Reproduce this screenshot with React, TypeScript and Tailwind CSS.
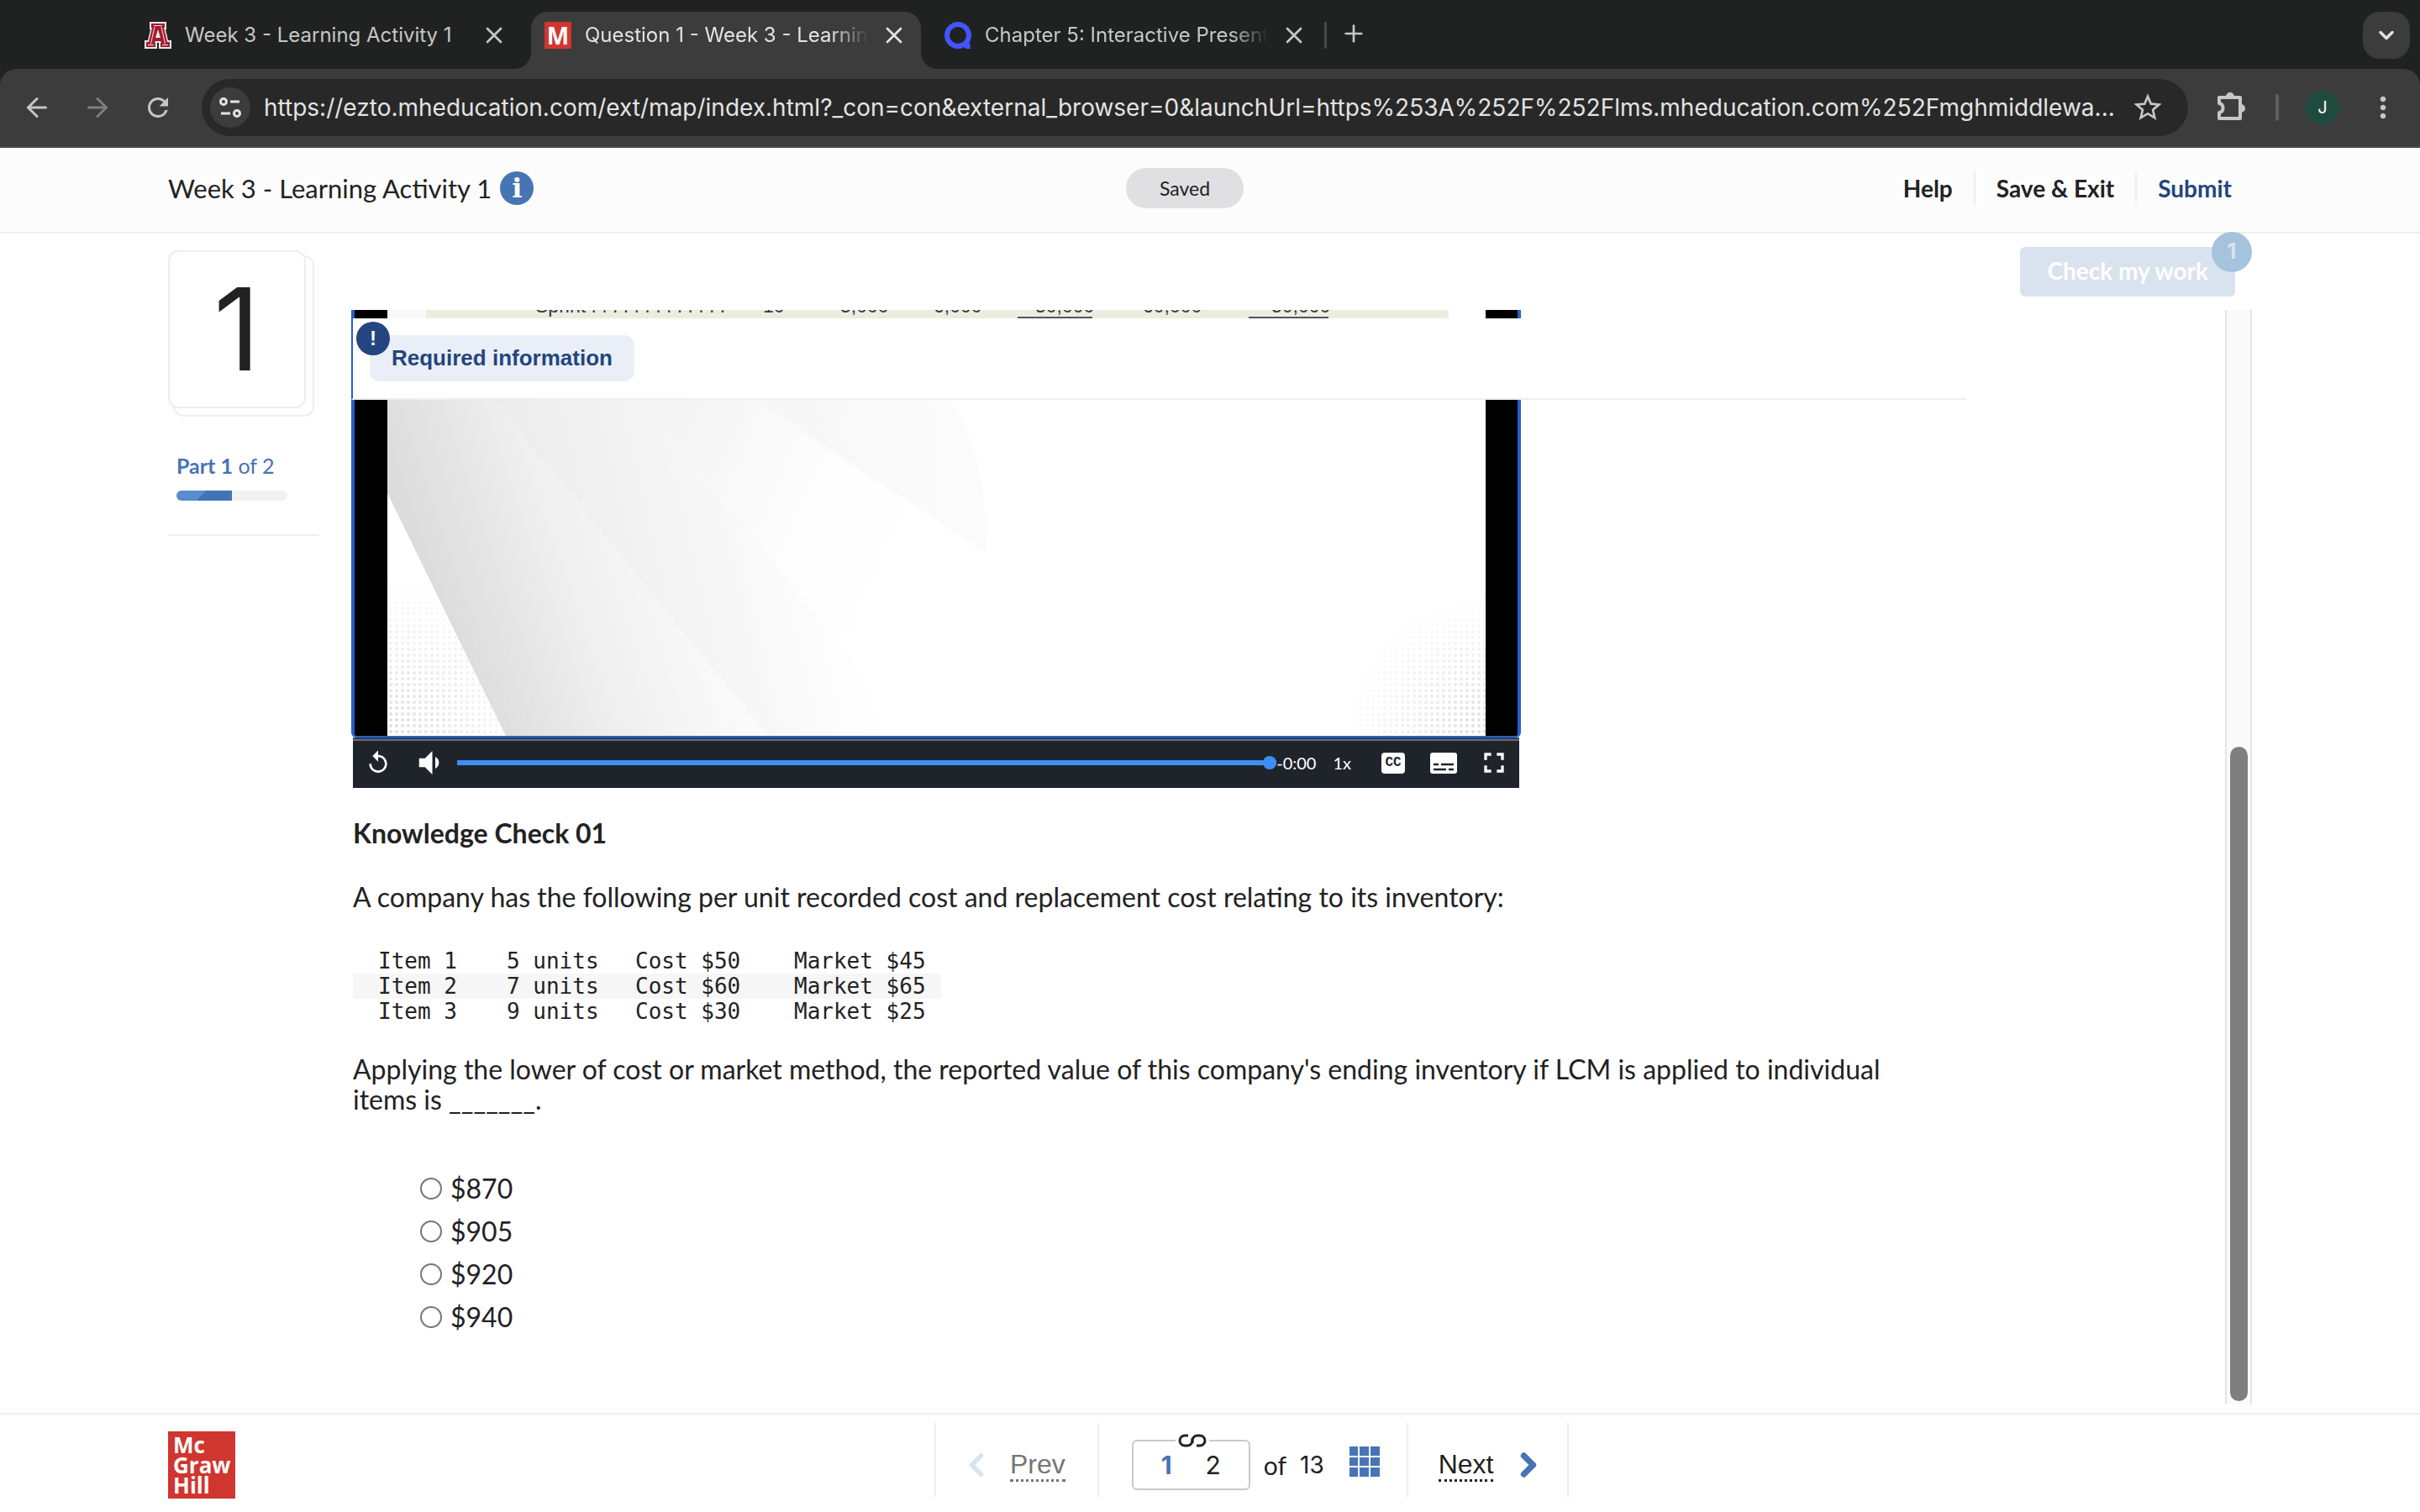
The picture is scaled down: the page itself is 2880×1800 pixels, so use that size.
import { ReactNode } from "react";
import {
  ArrowLeft,
  ArrowRight,
  ChevronDown,
  ChevronLeft,
  ChevronRight,
  Plus,
  X,
} from "lucide-react";
import {
  MdFullscreen,
  MdMoreVert,
  MdRefresh,
  MdReplay,
  MdStarBorder,
  MdVolumeDown,
} from "react-icons/md";

const pageUrl =
  "https://ezto.mheducation.com/ext/map/index.html?_con=con&external_browser=0&launchUrl=https%253A%252F%252Flms.mheducation.com%252Fmghmiddlewa...";

const inventory = [
  { item: "Item 1", units: "5 units", cost: "Cost $50", market: "Market $45" },
  { item: "Item 2", units: "7 units", cost: "Cost $60", market: "Market $65" },
  { item: "Item 3", units: "9 units", cost: "Cost $30", market: "Market $25" },
];

const answers = ["$870", "$905", "$920", "$940"];

function ArizonaIcon() {
  return (
    <svg viewBox="0 0 32 32" className="size-8 shrink-0">
      <path
        d="M6 0h20v9h-1l3 13h4v10H17v-7h-2v7H0V22h4L7 9H6z"
        fill="#e9e9e9"
      />
      <path
        d="M8 2h16v5h-1l4 17h3v6H19v-5h1l-1-2h-6l-1 2h1v5H2v-6h3L9 7H8z"
        fill="#a51c30"
      />
      <path
        d="M11 4.500h10M12 6L7.500 26M20 6l4.500 20M4 27.500h7M21 27.500h7"
        fill="none"
        stroke="#e9e9e9"
      />
      <path d="M16 9l3 10h-6z" fill="#e9e9e9" />
    </svg>
  );
}

function McGrawIcon() {
  return (
    <span className="flex size-8 shrink-0 items-center justify-center bg-[#d13530] font-['Open_Sans',sans-serif] text-[28px] leading-8 font-bold text-white">
      M
    </span>
  );
}

function QuizIcon() {
  return (
    <svg viewBox="0 0 32 32" className="size-8 shrink-0">
      <circle cx="16" cy="16" r="13" fill="none" stroke="#4255ff" strokeWidth="6" />
      <path d="M21 27l9-2 1 7h-6z" fill="#4255ff" />
    </svg>
  );
}

function SiteInfoIcon() {
  return (
    <svg
      viewBox="0 0 28 28"
      className="size-7"
      fill="none"
      stroke="#e3e3e3"
      strokeWidth="3"
    >
      <circle cx="6" cy="7" r="3.5" />
      <path d="M14 7h11M3 21h11" />
      <circle cx="22" cy="21" r="3.5" />
    </svg>
  );
}

function PuzzleIcon() {
  return (
    <svg
      viewBox="0 0 36 36"
      className="size-9"
      fill="none"
      stroke="#c7c7c7"
      strokeWidth="4"
      strokeLinejoin="round"
    >
      <path d="M5 6h25v25H5v-7c6-1 6-10 0-11z" />
      <path d="M13 5a5 5 0 0 1 10 0zM31 14a5 5 0 0 1 0 10z" fill="#c7c7c7" stroke="none" />
    </svg>
  );
}

function TabFlare({ className }: { className: string }) {
  return (
    <svg
      viewBox="0 0 20 20"
      className={`absolute bottom-0 size-5 ${className}`}
      fill="#3c3c3c"
    >
      <path d="M20 0A20 20 0 0 1 0 20h20z" />
    </svg>
  );
}

interface TabProps {
  icon: ReactNode;
  title: string;
  active?: boolean;
  faded?: boolean;
}

function BrowserTab({ icon, title, active, faded }: TabProps) {
  return (
    <div
      className={
        active
          ? "relative w-[464px] rounded-t-[20px] bg-[#3c3c3c] pb-3 text-[#e3e3e3]"
          : "w-[464px] text-[#c7c7c7]"
      }
    >
      {active && (
        <>
          <TabFlare className="-left-5" />
          <TabFlare className="-right-5 -scale-x-100" />
        </>
      )}
      <div className="flex h-14 items-center px-4">
        {icon}
        <span
          className={
            faded
              ? "ml-4 flex-1 overflow-hidden text-2xl whitespace-nowrap [mask-image:linear-gradient(to_right,black_85%,transparent_98%)]"
              : "ml-4 flex-1 text-2xl whitespace-nowrap"
          }
        >
          {title}
        </span>
        <button aria-label="Close tab" className="ml-2">
          <X className="size-8" strokeWidth={2} />
        </button>
      </div>
    </div>
  );
}

function BrowserChrome() {
  return (
    <div className="bg-[#202221] font-[Inter,sans-serif]">
      <div className="flex h-[82px] items-start gap-3 pt-3.5 pr-3 pl-[156px]">
        <BrowserTab icon={<ArizonaIcon />} title="Week 3 - Learning Activity 1" />
        <BrowserTab
          icon={<McGrawIcon />}
          title="Question 1 - Week 3 - Learning Activity 1"
          active
          faded
        />
        <BrowserTab
          icon={<QuizIcon />}
          title="Chapter 5: Interactive Presentation"
          faded
        />
        <div className="-ml-2 flex h-14 items-center gap-4 text-[#c7c7c7]">
          <span className="h-8 w-[3px] rounded bg-[#4a4a4a]" />
          <button aria-label="New tab" className="-mt-1">
            <Plus className="size-8" strokeWidth={2} />
          </button>
        </div>
        <button
          aria-label="Search tabs"
          className="ml-auto flex size-14 items-center justify-center rounded-[20px] bg-[#3c3c3c] text-[#e3e3e3]"
        >
          <ChevronDown className="size-7" strokeWidth={3} />
        </button>
      </div>
      <div className="flex h-[94px] items-center rounded-t-[20px] border-b-2 border-[#4a4a4a] bg-[#3c3c3c] px-6 text-[#c7c7c7]">
        <button aria-label="Back" className="px-0.5">
          <ArrowLeft className="size-9" strokeWidth={2} />
        </button>
        <button aria-label="Forward" className="ml-8 px-0.5 text-[#7f7f7f]">
          <ArrowRight className="size-9" strokeWidth={2} />
        </button>
        <button aria-label="Reload" className="ml-8 px-0.5">
          <MdRefresh className="size-9" />
        </button>
        <div className="ml-8 flex h-[68px] min-w-0 flex-1 items-center rounded-full bg-[#282828] pr-7 pl-2.5">
          <button
            aria-label="View site information"
            className="flex size-12 shrink-0 items-center justify-center rounded-full bg-[#3c3c3c]"
          >
            <SiteInfoIcon />
          </button>
          <input
            aria-label="Address"
            readOnly
            value={pageUrl}
            className="ml-4 min-w-0 flex-1 bg-transparent text-[28px] text-[#e3e3e3] outline-none"
          />
          <button aria-label="Bookmark" className="ml-3">
            <MdStarBorder className="size-10" />
          </button>
        </div>
        <button aria-label="Extensions" className="ml-8">
          <PuzzleIcon />
        </button>
        <span className="ml-9 h-8 w-1 rounded bg-[#5f5f5f]" />
        <button
          aria-label="Profile"
          className="ml-8 flex size-10 items-center justify-center rounded-full bg-[#1f4b3f] text-xl text-white"
        >
          J
        </button>
        <button aria-label="Menu" className="ml-8">
          <MdMoreVert className="size-10" />
        </button>
      </div>
    </div>
  );
}

function AssignmentHeader() {
  return (
    <header className="grid h-[102px] grid-cols-[1fr_auto_1fr] items-center border-b-2 border-[#eeeeee] bg-[#fcfcfc] pr-[212px] pb-1 pl-[200px]">
      <div className="flex items-center gap-2.5">
        <h1 className="text-[31px] leading-10">Week 3 - Learning Activity 1</h1>
        <button
          aria-label="Assignment information"
          className="flex size-10 items-center justify-center rounded-full bg-[#4774b5] font-['DejaVu_Serif',serif] text-[32px] leading-10 font-bold text-white"
        >
          i
        </button>
      </div>
      <span className="mr-12 rounded-full bg-[#e0dfe2] px-10 py-2 text-[23px] leading-8">
        Saved
      </span>
      <nav className="flex items-center justify-end divide-x-2 divide-[#eeeeee] text-[28px] leading-10 font-bold">
        <button className="px-[25px]">Help</button>
        <button className="px-[25px]">Save &amp; Exit</button>
        <button className="pr-3 pl-[25px] text-[#24457f]">Submit</button>
      </nav>
    </header>
  );
}

function QuestionSidebar() {
  return (
    <aside className="w-[180px] shrink-0 pt-5">
      <div className="relative h-[198px] w-[174px]">
        <div className="absolute right-0 bottom-0 h-[192px] w-[168px] rounded-xl border-2 border-[#eeeeee]" />
        <div className="relative flex h-[188px] w-[164px] items-center justify-center rounded-xl border-2 border-[#eeeeee] bg-white font-[Inter,sans-serif] text-[136px] leading-none">
          1
        </div>
      </div>
      <div className="mt-10 border-b-2 border-[#eeeeee] pb-10 pl-2.5">
        <p className="text-[25px] leading-9 text-[#4673b6]">
          <b>Part 1</b> of 2
        </p>
        <div className="mt-3 h-3 w-[132px] overflow-hidden rounded-full bg-[#f1f1f1]">
          <div className="h-full w-1/2 bg-[linear-gradient(135deg,#568dce_46%,#4273b6_46%)]" />
        </div>
      </div>
    </aside>
  );
}

// Slide table row that is still visible above the pinned banner
function VideoTopStrip() {
  return (
    <div className="flex h-2.5 w-[1392px] border-x-4 border-[#2860cb] bg-black">
      <svg
        viewBox="461 0 1307 10"
        className="ml-[39px] h-2.5 w-[1307px]"
        fontFamily="Liberation Sans, sans-serif"
        fontSize="23"
        fill="#3a3a3a"
      >
        <rect x="461" width="1307" height="10" fill="#f8f8f8" />
        <rect x="507" width="1217" height="10" fill="#ecece0" />
        <rect x="1724" width="44" height="10" fill="#fff" />
        <text x="637" y="3">Sprint . . . . . . . . . . . . .</text>
        <text x="908" y="3">10</text>
        <text x="1000" y="3">5,000</text>
        <text x="1111" y="3">6,000</text>
        <text x="1232" y="3">50,000</text>
        <text x="1360" y="3">60,000</text>
        <text x="1513" y="3">50,000</text>
        <path d="M1211 9h89M1486 9h95" stroke="#555" strokeWidth="2" />
      </svg>
    </div>
  );
}

function RequiredBanner() {
  return (
    <div className="flex h-[97px] items-start border-b-2 border-l-2 border-b-[#efefef] border-l-[#2860cb] bg-white pt-5 pl-5">
      <div className="relative rounded-xl bg-[#eaeff7] px-[26px]">
        <span className="absolute -top-4 -left-4 flex size-10 items-center justify-center rounded-full bg-[#24457f] font-['Liberation_Sans',sans-serif] text-2xl font-bold text-white">
          !
        </span>
        <h2 className="font-['Liberation_Sans',sans-serif] text-[26px] leading-[55px] font-bold text-[#24457f]">
          Required information
        </h2>
      </div>
    </div>
  );
}

function VideoStill() {
  return (
    <svg viewBox="461 476 1307 400" className="h-[400px] w-[1307px]">
      <defs>
        <linearGradient id="near" gradientUnits="userSpaceOnUse" x1="530" y1="740" x2="820" y2="640">
          <stop offset="0" stopColor="#dcdcdc" />
          <stop offset="0.5" stopColor="#efefef" />
          <stop offset="1" stopColor="#fbfbfb" />
        </linearGradient>
        <linearGradient id="mid" gradientUnits="userSpaceOnUse" x1="640" y1="640" x2="990" y2="560">
          <stop offset="0" stopColor="#ececec" />
          <stop offset="1" stopColor="#fff" />
        </linearGradient>
        <linearGradient id="far" gradientUnits="userSpaceOnUse" x1="800" y1="480" x2="1120" y2="620">
          <stop offset="0" stopColor="#f4f4f4" />
          <stop offset="0.6" stopColor="#fdfdfd" />
          <stop offset="1" stopColor="#fff" />
        </linearGradient>
        <linearGradient id="edge" gradientUnits="userSpaceOnUse" x1="900" y1="0" x2="1175" y2="0">
          <stop offset="0" stopColor="#f6f6f6" />
          <stop offset="1" stopColor="#fcfcfc" />
        </linearGradient>
        <pattern id="dots" width="7" height="7" patternUnits="userSpaceOnUse">
          <circle cx="3" cy="3" r="2" fill="#dcdcdc" />
        </pattern>
        <radialGradient id="fadeLeft" gradientUnits="userSpaceOnUse" cx="461" cy="876" r="190">
          <stop offset="0" stopColor="#fff" />
          <stop offset="1" stopColor="#000" />
        </radialGradient>
        <radialGradient id="fadeRight" gradientUnits="userSpaceOnUse" cx="1768" cy="876" r="170">
          <stop offset="0" stopColor="#fff" />
          <stop offset="1" stopColor="#000" />
        </radialGradient>
        <mask id="maskLeft">
          <rect x="461" y="476" width="300" height="400" fill="url(#fadeLeft)" />
        </mask>
        <mask id="maskRight">
          <rect x="1500" y="476" width="268" height="400" fill="url(#fadeRight)" />
        </mask>
      </defs>
      <rect x="461" y="476" width="1307" height="400" fill="#fff" />
      <path d="M900 476h230q45 60 45 184z" fill="url(#edge)" />
      <path d="M762 476h138l275 184-60 216h-26z" fill="url(#far)" />
      <path d="M587 476h175l327 400H914z" fill="url(#mid)" />
      <path d="M461 476h126l327 400H602L461 587z" fill="url(#near)" />
      <rect x="461" y="676" width="200" height="200" fill="url(#dots)" mask="url(#maskLeft)" />
      <rect x="1560" y="676" width="208" height="200" fill="url(#dots)" mask="url(#maskRight)" />
    </svg>
  );
}

function VideoPlayer() {
  return (
    <div className="w-[1392px]">
      <div className="rounded-b-md border-x-4 border-b-2 border-[#2860cb] bg-black pl-[39px]">
        <VideoStill />
      </div>
      <div className="mx-0.5 h-[60px] border-t-2 border-[#2c3f63] bg-[#1f242b] text-white">
        <div className="flex h-[54px] items-center border-t-2 border-[#666b72] pr-2.5 pl-3.5">
          <button aria-label="Replay">
            <MdReplay className="size-8" />
          </button>
          <button aria-label="Mute" className="ml-6">
            <MdVolumeDown className="size-[42px]" />
          </button>
          <input
            type="range"
            aria-label="Seek"
            min={0}
            max={100}
            defaultValue={100}
            className="ml-3 h-1.5 min-w-0 flex-1 appearance-none bg-[#3f8ef7] [&::-webkit-slider-thumb]:size-4 [&::-webkit-slider-thumb]:appearance-none [&::-webkit-slider-thumb]:rounded-full [&::-webkit-slider-thumb]:bg-[#3f8ef7]"
          />
          <span className="text-[20px]">-0:00</span>
          <button aria-label="Playback speed" className="ml-5 text-[20px]">
            1x
          </button>
          <button
            aria-label="Captions"
            className="ml-9 flex h-[25px] w-7 items-center justify-center rounded-sm bg-white font-['Liberation_Mono',monospace] text-base leading-none font-bold text-[#1f242b]"
          >
            CC
          </button>
          <button aria-label="Transcript" className="ml-[30px]">
            <svg viewBox="0 0 32 25" className="h-[25px] w-8">
              <rect width="32" height="25" rx="3" fill="#fff" />
              <path
                d="M4 14h6M13 14h15M4 20h15M22 20h6"
                stroke="#1f242b"
                strokeWidth="2.5"
              />
            </svg>
          </button>
          <button aria-label="Full screen" className="ml-6">
            <MdFullscreen className="size-10" />
          </button>
        </div>
      </div>
    </div>
  );
}

function Question() {
  return (
    <div className="ml-0.5 max-w-[1840px] text-[32px] leading-9">
      <h3 className="mt-9 font-bold">Knowledge Check 01</h3>
      <p className="mt-10">
        A company has the following per unit recorded cost and replacement cost
        relating to its inventory:
      </p>
      <table className="mt-[43px] font-['DejaVu_Sans_Mono',monospace] text-[26px] leading-[30px]">
        <tbody>
          {inventory.map((row) => (
            <tr key={row.item} className="even:bg-[#f6f6f6]">
              <td className="w-[153px] p-0 pl-[30px]">{row.item}</td>
              <td className="w-[153px] p-0 pl-[30px]">{row.units}</td>
              <td className="w-[189px] p-0 pl-[30px]">{row.cost}</td>
              <td className="p-0 pr-[18px] pl-[30px]">{row.market}</td>
            </tr>
          ))}
        </tbody>
      </table>
      <p className="mt-9">
        Applying the lower of cost or market method, the reported value of this
        company's ending inventory if LCM is applied to individual items is
        _______.
      </p>
      <fieldset className="mt-[62px] pl-20">
        {answers.map((answer) => (
          <label key={answer} className="flex h-[51px] w-fit items-center gap-2.5">
            <input
              type="radio"
              name="answer"
              className="size-[26px] appearance-none rounded-full border-2 border-[#767676] bg-white"
            />
            {answer}
          </label>
        ))}
      </fieldset>
    </div>
  );
}

function PageNumber({ page, current }: { page: number; current?: boolean }) {
  return (
    <button
      className={
        current
          ? "font-[Inter,sans-serif] font-bold text-[#4774b5]"
          : "font-[Inter,sans-serif]"
      }
    >
      {page}
    </button>
  );
}

function Footer() {
  return (
    <footer className="flex h-[118px] items-start border-t-2 border-[#eeeeee] pl-[200px]">
      <div className="mt-5 size-20 shrink-0 bg-[#d13530] pt-1 pl-1.5 font-['Open_Sans',sans-serif] text-[26px] leading-6 font-bold text-white">
        Mc
        <br />
        Graw
        <br />
        Hill
      </div>
      <nav className="mt-2.5 ml-[832px] flex h-[88px] items-center divide-x-2 divide-[#eeeeee] border-x-2 border-[#eeeeee] text-[30px]">
        <button className="flex h-full items-center gap-[18px] pt-3 pr-[38px] pl-[26px] font-['Liberation_Sans',sans-serif] text-[32px] leading-9 text-[#757575]">
          <ChevronLeft className="size-11 text-[#d9e3ef]" strokeWidth={3} />
          <span className="border-b-3 border-dotted border-[#757575]">Prev</span>
        </button>
        <div className="flex h-full items-center pt-3 pr-8 pl-[39px]">
          <div className="relative flex h-[60px] w-[141px] items-center justify-center gap-10 rounded-md border-2 border-[#c9c9c9]">
            <PageNumber page={1} current />
            <PageNumber page={2} />
            <svg
              viewBox="0 0 40 18"
              className="absolute -top-2.5 left-[50px] h-[18px] w-10 bg-white"
              fill="none"
              stroke="#222"
              strokeWidth="3"
            >
              <path d="M15 3h-4a6 6 0 0 0 0 12h3a6 6 0 0 0 6-6V6" />
              <path d="M25 15h4a6 6 0 0 0 0-12h-3a6 6 0 0 0-6 6v3" />
            </svg>
          </div>
          <span className="ml-4">of</span>
          <span className="ml-4 font-[Inter,sans-serif] text-[28px]">13</span>
          <button
            aria-label="All questions"
            className="mb-2 ml-[30px] grid h-9 w-9 grid-cols-3 grid-rows-3 gap-0.5"
          >
            {Array.from({ length: 9 }, (_, i) => (
              <span key={i} className="bg-[#4774b5]" />
            ))}
          </button>
        </div>
        <button className="flex h-full items-center gap-5 pt-3 pr-6 pl-9 font-['Liberation_Sans',sans-serif] text-[32px] leading-9">
          <span className="border-b-3 border-dotted border-[#222222]">Next</span>
          <ChevronRight className="size-11 text-[#4774b5]" strokeWidth={4} />
        </button>
      </nav>
    </footer>
  );
}

export default function App() {
  return (
    <div className="flex h-screen flex-col bg-white font-[Lato,sans-serif] text-[#222222]">
      <BrowserChrome />
      <AssignmentHeader />
      <main className="flex min-h-0 flex-1 px-[200px]">
        <QuestionSidebar />
        <div className="flex min-w-0 flex-1 flex-col pl-[38px]">
          <div className="flex h-[91px] shrink-0 justify-end pt-4 pr-5">
            <button
              disabled
              className="relative h-[59px] rounded-md bg-[#d9e3ef] px-8 pb-1 text-[28px] font-bold text-white"
            >
              Check my work
              <span className="absolute -top-[18px] -right-5 flex size-12 items-center justify-center rounded-full bg-[#a6c3de] font-[Inter,sans-serif] text-[25px] text-[#d9e3ef]">
                1
              </span>
            </button>
          </div>
          <div className="flex min-h-0 flex-1">
            <div className="min-w-0 flex-1 overflow-hidden pr-[308px]">
              <VideoTopStrip />
              <RequiredBanner />
              <VideoPlayer />
              <Question />
            </div>
            <div className="mb-2.5 flex w-8 flex-col justify-end border-x-2 border-[#e4e4e4] bg-[#fafafa] pb-1 pl-1">
              <div className="h-3/5 w-[21px] rounded-full bg-[#7f7f7f]" />
            </div>
          </div>
        </div>
      </main>
      <Footer />
    </div>
  );
}
